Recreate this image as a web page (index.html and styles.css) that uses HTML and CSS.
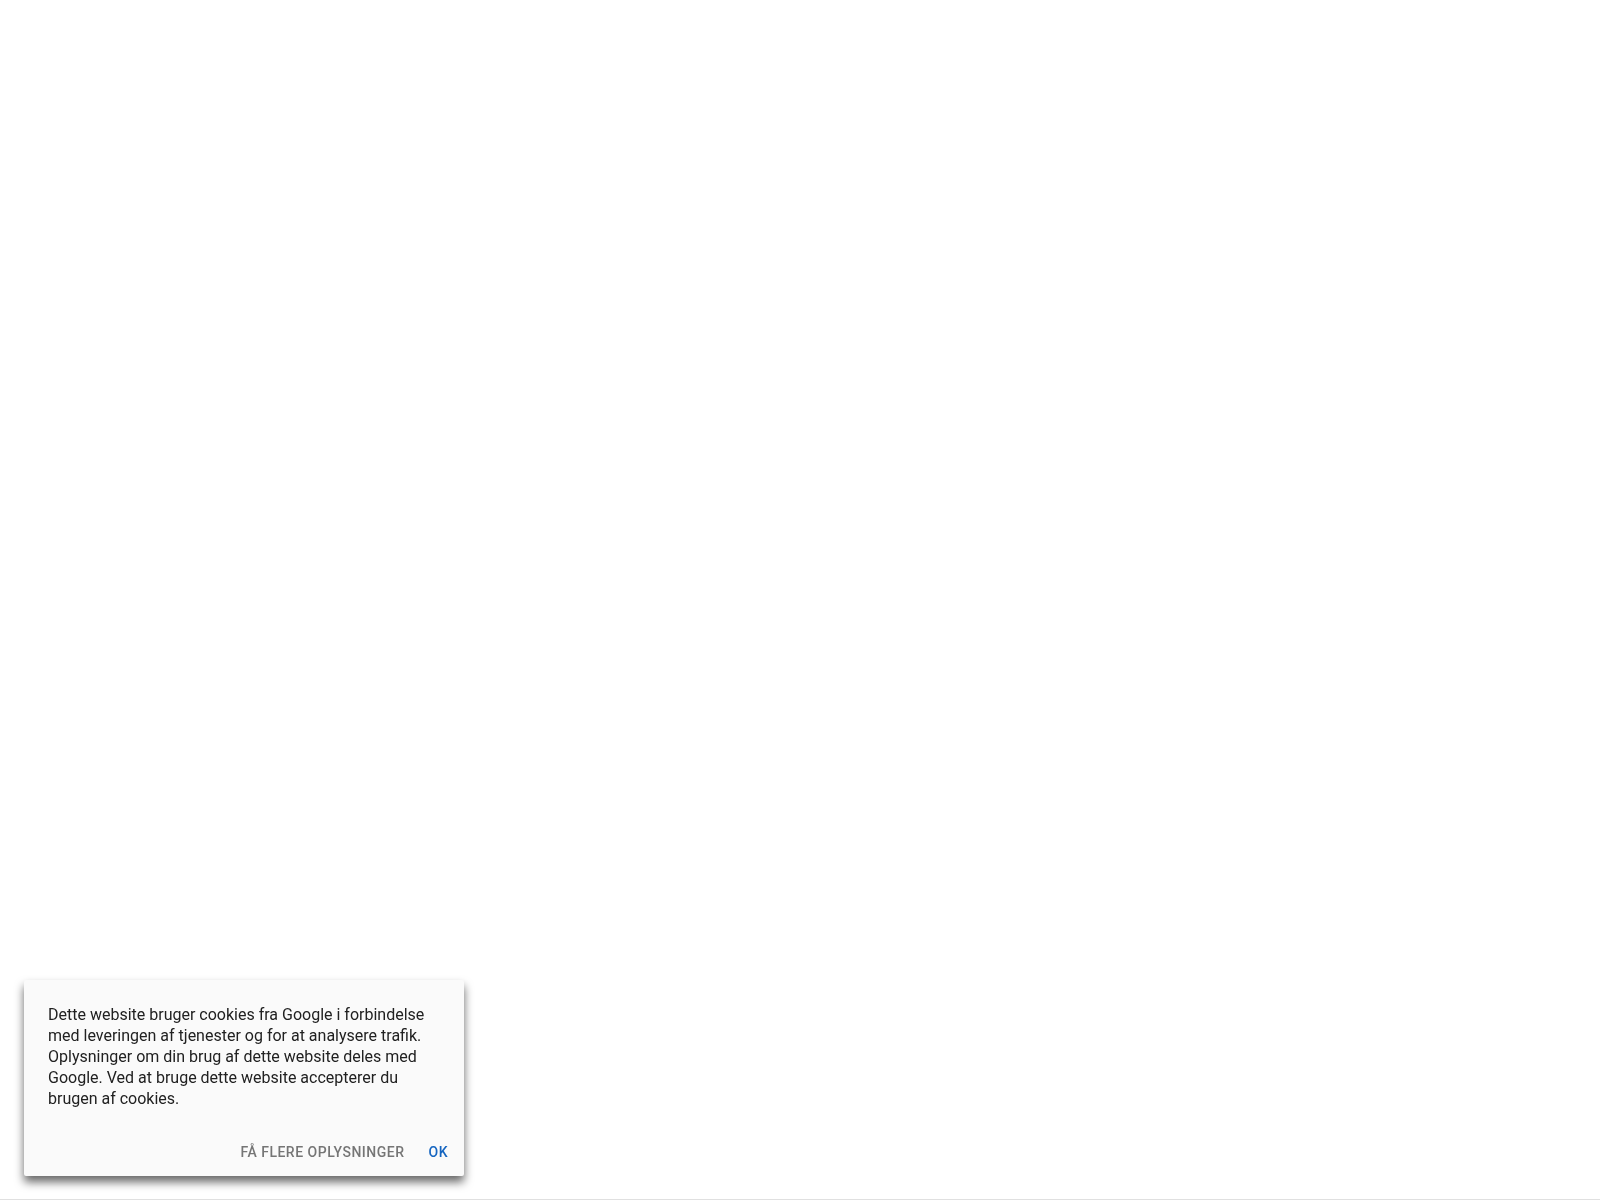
FILE: index.html
```html
<!DOCTYPE html>
<html lang="da">
<head>
    <meta charset="UTF-8">
    <meta name="viewport" content="width=device-width, initial-scale=1">
    <title>Cookies</title>

    <link rel="stylesheet" href="styles.css">
</head>
<body>

    <main class="page"></main>

    <section class="cookie-bar" aria-label="Cookies">
        <p class="cookie-bar-text">Dette website bruger cookies fra Google i forbindelse med leveringen af tjenester og for at analysere trafik. Oplysninger om din brug af dette website deles med Google. Ved at bruge dette website accepterer du brugen af cookies.</p>
        <div class="cookie-bar-buttons">
            <a class="cookie-bar-button" href="#">Få flere oplysninger</a>
            <button class="cookie-bar-button accept" type="button">OK</button>
        </div>
    </section>

</body>
</html>
```

FILE: styles.css
```css
*, *:after, *:before {
    box-sizing: border-box;
    margin: 0;
    padding: 0;
}

body {
    background: #fff;
    color: #212121;
    font-family: Roboto, sans-serif;
    font-size: 16px;
}

.page {
    min-height: 100vh;
    border-bottom: 1px solid #e0e0e0;
}

/* cookie notice */
.cookie-bar {
    position: fixed;
    bottom: 24px;
    left: 24px;
    max-width: 440px;
    padding: 24px 8px 8px 24px;
    background: #fafafa;
    border-radius: 2px;
    box-shadow: 0 6px 10px rgba(0,0,0,0.6);
}

.cookie-bar-text {
    padding-right: 16px;
    margin-bottom: 27px;
    line-height: 21px;
}

.cookie-bar-buttons {
    display: flex;
    justify-content: flex-end;
    gap: 8px;
}

.cookie-bar-button {
    padding: 0 8px;
    border: 0;
    background: none;
    color: #757575;
    font-family: inherit;
    font-size: 14px;
    font-weight: 500;
    letter-spacing: 0.5px;
    line-height: 32px;
    text-decoration: none;
    text-transform: uppercase;
    cursor: pointer;
}

.cookie-bar-button.accept {
    color: #1565c0;
}

@media(max-width: 488px) {
    .cookie-bar {
        right: 0;
        bottom: 0;
        left: 0;
        max-width: none;
    }
}
```
